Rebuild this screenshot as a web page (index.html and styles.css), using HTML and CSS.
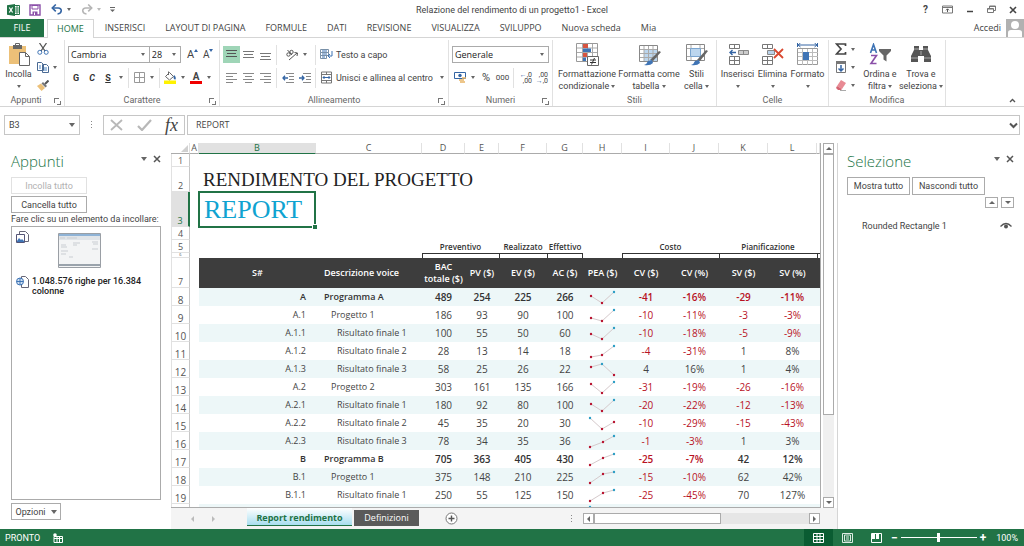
FILE: index.html
```html
<!DOCTYPE html>
<html lang="it">
<head>
<meta charset="utf-8">
<title>Relazione del rendimento di un progetto1 - Excel</title>
<link rel="stylesheet" href="styles.css">
</head>
<body>
<header class="titlebar">
  <div class="quick">
    <svg class="app-logo" width="13" height="12" viewBox="0 0 13 12"><path d="M7 1.500h5.500v9H7z" fill="#fff" stroke="#217346"/><path d="M8 4h4M8 6h4M8 8h4M10 2v8" stroke="#217346" stroke-width=".8"/><path d="M0 1.200 8 0v12L0 10.800z" fill="#217346"/><path d="m2.300 3.500 3.300 5M5.600 3.500l-3.300 5" stroke="#fff" stroke-width="1.300"/></svg>
    <button class="ib" aria-label="Salva"><svg width="12" height="12" viewBox="0 0 12 12"><path d="M1 1h10v10H1z" fill="#fff" stroke="#8a4fa8" stroke-width="1.400"/><path d="M3 1.500h6V5H3z" fill="#fff" stroke="#8a4fa8"/><path d="M3.500 7.500h5V11h-5z" fill="#8a4fa8"/><path d="M5 8.500h1V11H5z" fill="#fff"/></svg></button>
    <button class="ib undo" aria-label="Annulla"><svg width="12" height="11" viewBox="0 0 12 11"><path d="M1.500 4h5.700c4.200 0 4.200 5.500-.7 6" fill="none" stroke="#3465a4" stroke-width="1.600"/><path d="M4.800.5 1.300 4l3.500 3.400" fill="none" stroke="#3465a4" stroke-width="1.600"/></svg><i class="caret"></i></button>
    <button class="ib redo" aria-label="Ripristina"><svg width="12" height="11" viewBox="0 0 12 11"><path d="M10.500 4H4.800C.6 4 .6 9.500 5.500 10" fill="none" stroke="#b5b5b5" stroke-width="1.600"/><path d="m7.200.5 3.500 3.500-3.500 3.400" fill="none" stroke="#b5b5b5" stroke-width="1.600"/></svg><i class="caret pale"></i></button>
    <button class="ib" aria-label="Personalizza"><svg width="5" height="6" viewBox="0 0 5 6"><path d="M0 .5h5" stroke="#666"/><path d="M0 2.500h5L2.500 5z" fill="#666"/></svg></button>
  </div>
  <h1 class="doc-title">Relazione del rendimento di un progetto1 - Excel</h1>
  <div class="window-buttons">
    <button class="ib help" aria-label="Guida">?</button>
    <button class="ib" aria-label="Opzioni barra multifunzione"><svg width="11" height="9" viewBox="0 0 11 9"><path d="M.5 1h10v7H.500zM.5 2.500h10" fill="none" stroke="#777"/><path d="M5.500 7V4M4 5.300l1.500-1.500L7 5.300" fill="none" stroke="#555"/></svg></button>
    <button class="ib" aria-label="Riduci a icona"><svg width="8" height="8" viewBox="0 0 8 8"><path d="M1 5.500h6" stroke="#444" stroke-width="1.500"/></svg></button>
    <button class="ib" aria-label="Ripristina giù"><svg width="9" height="9" viewBox="0 0 9 9"><path d="M.5 3.500h6v4h-6zM.5 4h6M2.500 3V1h6v4.500H7M2.500 1.500h6" fill="none" stroke="#777"/></svg></button>
    <button class="ib" aria-label="Chiudi"><svg width="8" height="8" viewBox="0 0 8 8"><path d="m1 1 6 6M7 1 1 7" stroke="#444" stroke-width="1.600"/></svg></button>
  </div>
</header>

<nav class="tabs">
  <button class="tab file">FILE</button>
  <button class="tab active">HOME</button>
  <button class="tab">INSERISCI</button>
  <button class="tab">LAYOUT DI PAGINA</button>
  <button class="tab">FORMULE</button>
  <button class="tab">DATI</button>
  <button class="tab">REVISIONE</button>
  <button class="tab">VISUALIZZA</button>
  <button class="tab">SVILUPPO</button>
  <button class="tab">Nuova scheda</button>
  <button class="tab">Mia</button>
  <button class="account">Accedi
    <svg width="18" height="18" viewBox="0 0 18 18"><path d="M0 0h18v18H0z" fill="#b1b1b1"/><circle cx="9" cy="6" r="4" fill="#fff"/><path d="M2 18v-4.500Q2 11 5 11h8q3 0 3 2.500V18z" fill="#fff"/></svg>
  </button>
</nav>

<section class="ribbon">
  <div class="group g-clipboard">
    <div class="body row-body">
      <button class="big paste"><svg width="22" height="23" viewBox="0 0 22 23"><path d="M1 3h17v18H1z" fill="#ecc078"/><path d="M5 2h9v4H5z" fill="#666"/><path d="M7.500.5h4V3h-4z" fill="none" stroke="#666"/><path d="M11.500 9.500h6l4 4v9h-10z" fill="#fff" stroke="#666"/><path d="M17.500 9.500v4h4" fill="none" stroke="#666"/></svg><span>Incolla</span><i class="caret"></i></button>
      <div class="stack">
        <button class="ib" aria-label="Taglia"><svg width="12" height="12" viewBox="0 0 12 12"><path d="m2.500 0 5.500 8M9.500 0 4 8" stroke="#555" stroke-width="1.300"/><circle cx="2.800" cy="9.300" r="2" fill="none" stroke="#3f74b5"/><circle cx="9.200" cy="9.300" r="2" fill="none" stroke="#3f74b5"/></svg></button>
        <button class="ib" aria-label="Copia"><svg width="12" height="11" viewBox="0 0 12 11"><path d="M.5.500h4l2 2v6h-6zM5.500 2.500h4l2 2v6h-6z" fill="#fff" stroke="#4a6a94"/><path d="M2 4h2M2 6h2M7 6h3M7 8h3" stroke="#4a84c4"/></svg><i class="caret"></i></button>
        <button class="ib" aria-label="Copia formato"><svg width="12" height="11" viewBox="0 0 12 11"><path d="m0 6 4-2.500L8 8l-3.500 3z" fill="#ecc078"/><path d="m4.500 3.500 4 4L10 6 6 2z" fill="#777"/><path d="m8 4 3.500-3.500" stroke="#555" stroke-width="2"/></svg></button>
      </div>
    </div>
    <div class="label">Appunti<i class="launcher"></i></div>
  </div>

  <div class="group g-font">
    <div class="body">
      <div class="row">
        <span class="combo font-name"><select aria-label="Tipo di carattere"><option>Cambria</option></select></span><span class="combo font-size"><select aria-label="Dimensione carattere"><option>28</option></select></span>
        <button class="ib grow" aria-label="Aumenta dimensione carattere">A<svg width="4" height="3" viewBox="0 0 4 3"><path d="m0 3 2-3 2 3z" fill="#3465a4"/></svg></button>
        <button class="ib shrink" aria-label="Riduci dimensione carattere">A<svg width="4" height="3" viewBox="0 0 4 3"><path d="m0 0 2 3 2-3z" fill="#3465a4"/></svg></button>
      </div>
      <div class="row">
        <button class="ib w16 bold">G</button><button class="ib w16 bold italic">C</button><button class="ib w16 bold underline">S</button><button class="ib w10" aria-label="Sottolineature"><i class="caret"></i></button>
        <i class="sep"></i>
        <button class="ib w16" aria-label="Bordi"><svg width="11" height="11" viewBox="0 0 11 11"><path d="M.5.500h10v10H.500zM5.500 1v9M1 5.500h9" fill="none" stroke="#999"/></svg></button><button class="ib w10" aria-label="Altri bordi"><i class="caret"></i></button>
        <i class="sep"></i>
        <button class="ib w16" aria-label="Colore riempimento"><svg width="13" height="13" viewBox="0 0 13 13"><path d="m5.500 1.500 4 4-4 3.500-4-3.500z" fill="#fff" stroke="#666"/><path d="M4.500 4V.5" stroke="#666"/><path d="M10 4q2.500 2 1.500 4.500Q9.500 9 9.500 6z" fill="#3465a4"/><path d="M0 9.500h12V13H0z" fill="#fff200"/></svg></button><button class="ib w10" aria-label="Altri riempimenti"><i class="caret"></i></button>
        <button class="ib font-color" aria-label="Colore carattere">A</button><button class="ib w10" aria-label="Altri colori"><i class="caret"></i></button>
      </div>
    </div>
    <div class="label">Carattere<i class="launcher"></i></div>
  </div>

  <div class="group g-align">
    <div class="body">
      <div class="row">
        <button class="ib w17 on" aria-label="Allinea in alto"><svg width="11" height="11" viewBox="0 0 11 11"><path d="M0 1.500h11M1 4.500h9M0 7.500h11" stroke="#555"/></svg></button><button class="ib w17" aria-label="Allinea al centro verticalmente"><svg width="11" height="11" viewBox="0 0 11 11"><path d="M0 2.500h11M1 5.500h9M0 8.500h11" stroke="#777"/></svg></button><button class="ib w17" aria-label="Allinea in basso"><svg width="11" height="11" viewBox="0 0 11 11"><path d="M0 4.500h11M1 7.500h9M0 10.500h11" stroke="#777"/></svg></button>
        <i class="sep"></i>
        <button class="ib w34" aria-label="Orientamento"><svg width="12" height="12" viewBox="0 0 12 12"><circle cx="2.500" cy="5.500" r="1.700" fill="none" stroke="#555"/><circle cx="5.500" cy="3" r="1.700" fill="none" stroke="#555"/><path d="m1.500 1 4.500 5M3 11l8-7M8.500 3.500 11.500 4 11 7" fill="none" stroke="#555"/></svg><i class="caret"></i></button>
        <i class="sep"></i>
        <button class="text-button"><svg width="13" height="13" viewBox="0 0 13 13"><path d="M.5 1.500h8v3h-8zM.5 4.500h8v3h-8zM.5 7.500h6v3h-6z" fill="#fff" stroke="#7890a8"/><path d="M2 3h5M2 6h5M2 9h3" stroke="#3f74b5"/><path d="M12 3v5H8m2-2L8 8l2 2" fill="none" stroke="#3f74b5"/></svg>Testo a capo</button>
      </div>
      <div class="row">
        <button class="ib w17" aria-label="Allinea a sinistra"><svg width="11" height="10" viewBox="0 0 11 10"><path d="M0 .5h11M0 3.500h7M0 6.500h11M0 9.500h7" stroke="#888"/></svg></button><button class="ib w17" aria-label="Centra"><svg width="11" height="10" viewBox="0 0 11 10"><path d="M0 .5h11M2 3.500h7M0 6.500h11M2 9.500h7" stroke="#888"/></svg></button><button class="ib w17" aria-label="Allinea a destra"><svg width="11" height="10" viewBox="0 0 11 10"><path d="M0 .5h11M4 3.500h7M0 6.500h11M4 9.500h7" stroke="#888"/></svg></button>
        <i class="sep"></i>
        <button class="ib w17" aria-label="Riduci rientro"><svg width="12" height="10" viewBox="0 0 12 10"><path d="M4 .5h8M7 3.500h5M7 6.500h5M4 9.500h8" stroke="#888"/><path d="M6 5H1m2-2.200L1 5l2 2.200" fill="none" stroke="#3465a4" stroke-width="1.300"/></svg></button><button class="ib w17" aria-label="Aumenta rientro"><svg width="12" height="10" viewBox="0 0 12 10"><path d="M4 .5h8M7 3.500h5M7 6.500h5M4 9.500h8" stroke="#888"/><path d="M0 5h5M3 2.800 5 5 3 7.200" fill="none" stroke="#3465a4" stroke-width="1.300"/></svg></button>
        <i class="sep"></i>
        <button class="text-button"><svg width="13" height="13" viewBox="0 0 13 13"><path d="M1.500 1h10v11h-10zM1.500 3.500h10M1.500 9.500h10M6.500 1v2.500M6.500 9.500V12" fill="none" stroke="#777"/><path d="M3 6.500h7M4.500 5 3 6.500 4.500 8M8.500 5 10 6.500 8.500 8" fill="none" stroke="#3465a4"/></svg>Unisci e allinea al centro<i class="caret far"></i></button>
      </div>
    </div>
    <div class="label">Allineamento<i class="launcher"></i></div>
  </div>

  <div class="group g-number">
    <div class="body">
      <div class="row"><span class="combo number-format"><select aria-label="Formato numero"><option>Generale</option></select></span></div>
      <div class="row">
        <button class="ib w16" aria-label="Formato contabilità"><svg width="13" height="13" viewBox="0 0 13 13"><path d="M.5 1.500h11v6H.500z" fill="#fff" stroke="#3465a4"/><circle cx="6" cy="4.500" r="1.700" fill="#3465a4"/><path d="M5 9h5M6 11h5M8 7h4" stroke="#e8b464" stroke-width="1.500"/></svg></button><button class="ib w10" aria-label="Altri formati contabilità"><i class="caret"></i></button>
        <button class="ib w16 percent">%</button><button class="ib w17 thousands">000</button>
        <i class="sep"></i>
        <button class="ib w16 decimals" aria-label="Aumenta decimali"><span><b>←</b>,0</span><span>,00</span></button>
        <button class="ib w16 decimals" aria-label="Diminuisci decimali"><span>,00</span><span><b>→</b>,0</span></button>
      </div>
    </div>
    <div class="label">Numeri<i class="launcher"></i></div>
  </div>

  <div class="group g-styles">
    <div class="body row-body">
      <button class="big w62"><svg width="23" height="23" viewBox="0 0 23 23"><path d="M.5.500h21v18H.500z" fill="#fff" stroke="#999"/><path d="M1 5h20M1 9.500h20M1 14h20M6.500 1v17M11.500 1v17M16.500 1v17" stroke="#aaa"/><path d="M7 1h5v4H7z" fill="#d65440"/><path d="M7 5.500h8V9H7z" fill="#3f74b5"/><path d="M7 10h4v4H7z" fill="#d65440"/><path d="M7 14.500h3V18H7z" fill="#3f74b5"/><path d="M11.500 13.500h11v9h-11z" fill="#fff" stroke="#666"/><path d="M14 17h6M14 19.500h6M18.500 15l-3 6.500" stroke="#333"/></svg><span>Formattazione</span><span>condizionale <i class="caret"></i></span></button>
      <button class="big w62"><svg width="23" height="23" viewBox="0 0 23 23"><path d="M1.500 2.500h18v16h-18z" fill="#fff" stroke="#888"/><path d="M6 7h13v11H6z" fill="#bcd6ee"/><path d="M2 6.500h17M2 10.500h17M2 14.500h17M6 3v15M10.500 3v15M15 3v15" stroke="#aaa"/><path d="m12 17 9-9 2 1-8 9z" fill="#666"/><path d="M6 22q3-1 4-4l4-1 1 3q-3 3-9 2z" fill="#3f74b5"/></svg><span>Formatta come</span><span>tabella <i class="caret"></i></span></button>
      <button class="big w32"><svg width="23" height="23" viewBox="0 0 23 23"><path d="M1.500 1.500h18v16h-18z" fill="#fff" stroke="#888"/><path d="M2 5.500h17M2 13.500h17M6 2v15M15 2v15" stroke="#aaa"/><path d="M5.500 5.500h10v8h-10z" fill="#bcd6ee" stroke="#7ba5cf"/><path d="m12 17 9-10 2 1-8 10z" fill="#666"/><path d="M6 22q3-1 4-4l4-1 1 3q-3 3-9 2z" fill="#3f74b5"/></svg><span>Stili</span><span>cella <i class="caret"></i></span></button>
    </div>
    <div class="label">Stili</div>
  </div>

  <div class="group g-cells">
    <div class="body row-body">
      <button class="big"><svg width="22" height="23" viewBox="0 0 22 23"><path d="M2.500 1.500h10v4h-10zM7.500 1.500v4M2.500 13.500h10v8h-10zM7.500 13.500v8M2.500 17.500h10" fill="#fff" stroke="#777"/><path d="M11.500 7.500h10v4h-10zM16.500 7.500v4" fill="#ccc" stroke="#888"/><path d="M9 9.500H3M5.500 7 3 9.500 5.500 12" fill="none" stroke="#3465a4" stroke-width="1.400"/></svg><span>Inserisci</span><i class="caret"></i></button>
      <button class="big"><svg width="22" height="23" viewBox="0 0 22 23"><path d="M.5 1.500h10v4H.500zM5.500 1.500v4M.5 13.500h10v8H.500zM5.500 13.500v8M.5 17.500h10" fill="#fff" stroke="#777"/><path d="M5.500 7.500h7v4h-7z" fill="#b9d2ea" stroke="#888"/><path d="m12 6 9 9M21 6l-9 9" stroke="#d9482f" stroke-width="1.800"/></svg><span>Elimina</span><i class="caret"></i></button>
      <button class="big"><svg width="22" height="23" viewBox="0 0 22 23"><path d="M.5 5.500h20v16H.500z" fill="#fff" stroke="#999"/><path d="M1 9.500h20M1 13.500h20M1 17.500h20M5.500 6v16M10.500 6v16M15.500 6v16" stroke="#bbb"/><path d="M6 9h6v8H6z" fill="#3f74b5"/><path d="M1 2h19M3.500 0 1 2l2.500 2M17.500 0 20 2l-2.500 2M.5 0v4M20.500 0v4" fill="none" stroke="#3465a4"/></svg><span>Formato</span><i class="caret"></i></button>
    </div>
    <div class="label">Celle</div>
  </div>

  <div class="group g-edit">
    <div class="body row-body">
      <div class="stack">
        <button class="ib" aria-label="Somma automatica"><svg width="12" height="12" viewBox="0 0 12 12"><path d="M10.500 3V1H1.500l4.500 5-4.500 5h9V9" fill="none" stroke="#444" stroke-width="1.700"/></svg><i class="caret"></i></button>
        <button class="ib" aria-label="Riempimento"><svg width="12" height="12" viewBox="0 0 12 12"><path d="M1.500.500h9v11h-9z" fill="#fff" stroke="#777"/><path d="M1 0h10v3H1z" fill="#777"/><path d="M6 4v6M3.500 7.500 6 10l2.500-2.500" fill="none" stroke="#3465a4" stroke-width="1.500"/></svg><i class="caret"></i></button>
        <button class="ib" aria-label="Cancella"><svg width="12" height="12" viewBox="0 0 12 12"><path d="m6 1 5 3-4 6-5-3z" fill="#e88a94"/><path d="m2 7 5 3-1 1H3L1 9z" fill="#d56472"/><path d="M5 11.500h6" stroke="#aaa"/></svg><i class="caret"></i></button>
      </div>
      <button class="big w42"><svg width="22" height="23" viewBox="0 0 22 23"><path d="M1.500 10 4.500 1.500 7.500 10M2.500 7h4" fill="none" stroke="#3f74b5" stroke-width="1.600"/><path d="M2 12.500h5.500L2 20.500h5.500" fill="none" stroke="#8a4fa8" stroke-width="1.600"/><path d="M10 6h12v2l-4.500 4.500v6l-3-2v-4L10 8z" fill="#666"/></svg><span>Ordina e</span><span>filtra <i class="caret"></i></span></button>
      <button class="big w42"><svg width="22" height="23" viewBox="0 0 22 23"><path d="M4 3h5v4h4V3h5v4l3 6v6h-7v-6H8v6H1v-6l3-6z" fill="#555"/><path d="M1 15h7M14 15h7M4 6h5M13 6h5M11 8v4" stroke="#aaa"/></svg><span>Trova e</span><span>seleziona <i class="caret"></i></span></button>
    </div>
    <div class="label">Modifica</div>
  </div>
  <button class="ib collapse" aria-label="Comprimi barra multifunzione"><svg width="7" height="5" viewBox="0 0 7 5"><path d="m1 4 2.500-2.500L6 4" fill="none" stroke="#555" stroke-width="1.400"/></svg></button>
</section>

<section class="formula-bar">
  <div class="name-box"><input aria-label="Casella nome" value="B3"><i class="caret big-caret"></i></div>
  <i class="dots"></i>
  <div class="fx">
    <button class="ib" aria-label="Annulla modifica"><svg width="13" height="12" viewBox="0 0 13 12"><path d="m1 1 11 10M12 1 1 11" stroke="#b8b8b8" stroke-width="1.800"/></svg></button>
    <button class="ib" aria-label="Invio"><svg width="15" height="12" viewBox="0 0 15 12"><path d="m1 7 4 4 9-10" fill="none" stroke="#b8b8b8" stroke-width="2.200"/></svg></button>
    <button class="ib fx-label">fx</button>
  </div>
  <div class="formula"><input aria-label="Barra della formula" value="REPORT"><svg width="9" height="7" viewBox="0 0 9 7"><path d="m1 1.500 3.500 3.500L8 1.500" fill="none" stroke="#555" stroke-width="2"/></svg></div>
</section>

<main class="workspace">
  <aside class="pane clipboard-pane">
    <div class="pane-head"><h2>Appunti</h2><i class="caret big-caret"></i><button class="ib" aria-label="Chiudi Appunti"><svg width="8" height="8" viewBox="0 0 8 8"><path d="m1 1 6 6M7 1 1 7" stroke="#555" stroke-width="1.500"/></svg></button></div>
    <button class="btn wide" disabled>Incolla tutto</button>
    <button class="btn wide">Cancella tutto</button>
    <p class="hint">Fare clic su un elemento da incollare:</p>
    <ul class="clips">
      <li><svg width="13" height="13" viewBox="0 0 13 13"><path d="M3.500.500h6l3 3v7h-9z" fill="#fff" stroke="#667"/><path d="M.5 3.500h8v8h-8z" fill="#fff" stroke="#557"/><path d="m1 10 2-3 2 2 1-1 2 2v1H1z" fill="#3f74b5"/></svg>
        <svg class="thumb" width="43" height="35" viewBox="0 0 43 35"><path d="M.5.500h42v34H.500z" fill="#f3f4f5" stroke="#9a9fa5"/><path d="M1 1h41v2H1z" fill="#8fb3d6"/><path d="M1 3h41v4H1z" fill="#e0e4e8"/><path d="M2 5h5M9 5h10M3 12h5M3 14h6M15 10h7M15 12h4M3 18h7M3 21h5M11 24h4M34 9h6M35 11h5M34 16h6" stroke="#c9cdd2"/><path d="M1 32h41" stroke="#9aa3ac" stroke-width="2"/></svg></li>
      <li><svg width="13" height="12" viewBox="0 0 13 12"><path d="M5.500.500h4l3 3v8h-7z" fill="#fff" stroke="#667"/><circle cx="4" cy="5.500" r="3.500" fill="#cfe0f2" stroke="#3f74b5"/><path d="M.5 5.500h7M4 2v7" stroke="#3f74b5"/></svg><span>1.048.576 righe per 16.384 colonne</span></li>
    </ul>
    <button class="btn options">Opzioni <i class="caret big-caret"></i></button>
  </aside>

  <section class="workbook">
    <div class="viewport">
      <div class="sheet">
        <table>
          <colgroup><col class="c-h"><col class="c-a"><col class="c-b"><col class="c-c"><col class="c-d"><col class="c-e"><col class="c-f"><col class="c-g"><col class="c-hh"><col class="c-i"><col class="c-j"><col class="c-j"><col class="c-j"><col class="c-m"></colgroup>
          <thead><tr><th><svg width="7" height="7" viewBox="0 0 7 7"><path class="corner" d="M7 0v7H0z"/></svg></th><th>A</th><th class="sel">B</th><th>C</th><th>D</th><th>E</th><th>F</th><th>G</th><th>H</th><th>I</th><th>J</th><th>K</th><th>L</th><th></th></tr></thead>
          <tbody>
            <tr class="r13"><th>1</th><td colspan="13"></td></tr>
            <tr class="r25"><th>2</th><td></td><td colspan="12" class="title">RENDIMENTO DEL PROGETTO</td></tr>
            <tr class="r35"><th class="sel">3</th><td></td><td class="report">REPORT<i class="handle"></i></td><td colspan="11"></td></tr>
            <tr class="r13"><th>4</th><td colspan="13"></td></tr>
            <tr class="r13 caps"><th>5</th><td colspan="3"></td><td colspan="2">Preventivo</td><td>Realizzato</td><td>Effettivo</td><td></td><td colspan="2">Costo</td><td colspan="2">Pianificazione</td><td></td></tr>
            <tr class="r5"><th>6</th><td colspan="3"></td><td colspan="2" class="br"></td><td class="br"></td><td class="br end"></td><td></td><td colspan="2" class="br"></td><td colspan="2" class="br"></td><td class="br"></td></tr>
            <tr class="heads"><th>7</th><td></td><td>S#</td><td class="l">Descrizione voice</td><td>BAC totale ($)</td><td>PV ($)</td><td>EV ($)</td><td>AC ($)</td><td>PEA ($)</td><td>CV ($)</td><td>CV (%)</td><td>SV ($)</td><td>SV (%)</td><td></td></tr>
            <tr class="d band b"><th>8</th><td></td><td>A</td><td>Programma A</td><td>489</td><td>254</td><td>225</td><td>266</td><td><svg width="39" height="18"><path d="m8 8 11 7 12-11"/><circle cx="8" cy="8" r="1.200"/><circle cx="19" cy="15" r="1.200"/><circle class="hi" cx="31" cy="4" r="1.200"/></svg></td><td class="n">-41</td><td class="n">-16%</td><td class="n">-29</td><td class="n">-11%</td><td></td></tr>
            <tr class="d p"><th>9</th><td></td><td>A.1</td><td>Progetto 1</td><td>186</td><td>93</td><td>90</td><td>100</td><td><svg width="39" height="18"><path d="m8 12 11 3 12-11"/><circle cx="8" cy="12" r="1.200"/><circle cx="19" cy="15" r="1.200"/><circle class="hi" cx="31" cy="4" r="1.200"/></svg></td><td class="n">-10</td><td class="n">-11%</td><td class="n">-3</td><td class="n">-3%</td><td></td></tr>
            <tr class="d band s"><th>10</th><td></td><td>A.1.1</td><td>Risultato finale 1</td><td>100</td><td>55</td><td>50</td><td>60</td><td><svg width="39" height="18"><path d="m8 10 11 5 12-11"/><circle cx="8" cy="10" r="1.200"/><circle cx="19" cy="15" r="1.200"/><circle class="hi" cx="31" cy="4" r="1.200"/></svg></td><td class="n">-10</td><td class="n">-18%</td><td class="n">-5</td><td class="n">-9%</td><td></td></tr>
            <tr class="d s"><th>11</th><td></td><td>A.1.2</td><td>Risultato finale 2</td><td>28</td><td>13</td><td>14</td><td>18</td><td><svg width="39" height="18"><path d="m8 15 11-2 12-9"/><circle cx="8" cy="15" r="1.200"/><circle cx="19" cy="13" r="1.200"/><circle class="hi" cx="31" cy="4" r="1.200"/></svg></td><td class="n">-4</td><td class="n">-31%</td><td>1</td><td>8%</td><td></td></tr>
            <tr class="d band s"><th>12</th><td></td><td>A.1.3</td><td>Risultato finale 3</td><td>58</td><td>25</td><td>26</td><td>22</td><td><svg width="39" height="18"><path d="m8 7 11-3 12 11"/><circle cx="8" cy="7" r="1.200"/><circle class="hi" cx="19" cy="4" r="1.200"/><circle cx="31" cy="15" r="1.200"/></svg></td><td>4</td><td>16%</td><td>1</td><td>4%</td><td></td></tr>
            <tr class="d p"><th>13</th><td></td><td>A.2</td><td>Progetto 2</td><td>303</td><td>161</td><td>135</td><td>166</td><td><svg width="39" height="18"><path d="m8 6 11 9 12-11"/><circle cx="8" cy="6" r="1.200"/><circle cx="19" cy="15" r="1.200"/><circle class="hi" cx="31" cy="4" r="1.200"/></svg></td><td class="n">-31</td><td class="n">-19%</td><td class="n">-26</td><td class="n">-16%</td><td></td></tr>
            <tr class="d band s"><th>14</th><td></td><td>A.2.1</td><td>Risultato finale 1</td><td>180</td><td>92</td><td>80</td><td>100</td><td><svg width="39" height="18"><path d="m8 8 11 7 12-11"/><circle cx="8" cy="8" r="1.200"/><circle cx="19" cy="15" r="1.200"/><circle class="hi" cx="31" cy="4" r="1.200"/></svg></td><td class="n">-20</td><td class="n">-22%</td><td class="n">-12</td><td class="n">-13%</td><td></td></tr>
            <tr class="d s"><th>15</th><td></td><td>A.2.2</td><td>Risultato finale 2</td><td>45</td><td>35</td><td>20</td><td>30</td><td><svg width="39" height="18"><path d="m7 4 12 11 12-7"/><circle class="hi" cx="7" cy="4" r="1.200"/><circle cx="19" cy="15" r="1.200"/><circle cx="31" cy="8" r="1.200"/></svg></td><td class="n">-10</td><td class="n">-29%</td><td class="n">-15</td><td class="n">-43%</td><td></td></tr>
            <tr class="d band s"><th>16</th><td></td><td>A.2.3</td><td>Risultato finale 3</td><td>78</td><td>34</td><td>35</td><td>36</td><td><svg width="39" height="18"><path d="m7 15 13-5 11-6"/><circle cx="7" cy="15" r="1.200"/><circle cx="20" cy="10" r="1.200"/><circle class="hi" cx="31" cy="4" r="1.200"/></svg></td><td class="n">-1</td><td class="n">-3%</td><td>1</td><td>3%</td><td></td></tr>
            <tr class="d b"><th>17</th><td></td><td>B</td><td>Programma B</td><td>705</td><td>363</td><td>405</td><td>430</td><td><svg width="39" height="18"><path d="m7 15 13-7 11-4"/><circle cx="7" cy="15" r="1.200"/><circle cx="20" cy="8" r="1.200"/><circle class="hi" cx="31" cy="4" r="1.200"/></svg></td><td class="n">-25</td><td class="n">-7%</td><td>42</td><td>12%</td><td></td></tr>
            <tr class="d band p"><th>18</th><td></td><td>B.1</td><td>Progetto 1</td><td>375</td><td>148</td><td>210</td><td>225</td><td><svg width="39" height="18"><path d="m7 15 13-9 11-2"/><circle cx="7" cy="15" r="1.200"/><circle cx="20" cy="6" r="1.200"/><circle class="hi" cx="31" cy="4" r="1.200"/></svg></td><td class="n">-15</td><td class="n">-10%</td><td>62</td><td>42%</td><td></td></tr>
            <tr class="d s"><th>19</th><td></td><td>B.1.1</td><td>Risultato finale 1</td><td>250</td><td>55</td><td>125</td><td>150</td><td><svg width="39" height="18"><path d="m7 15 13-8 11-3"/><circle cx="7" cy="15" r="1.200"/><circle cx="20" cy="7" r="1.200"/><circle class="hi" cx="31" cy="4" r="1.200"/></svg></td><td class="n">-25</td><td class="n">-45%</td><td>70</td><td>127%</td><td></td></tr>
            <tr class="d band s"><th></th><td></td><td></td><td></td><td></td><td></td><td></td><td></td><td><svg width="39" height="18"><circle class="hi" cx="7" cy="3" r="1.200"/></svg></td><td></td><td></td><td></td><td></td><td></td></tr>
          </tbody>
        </table>
      </div>
      <div class="vscroll"><button class="sb" aria-label="Scorri su"><i class="arrow up"></i></button><i class="thumb-v"></i><i class="track"></i><button class="sb" aria-label="Scorri giù"><i class="arrow down"></i></button></div>
    </div>
    <div class="sheet-tabs">
      <div class="tab-nav"><i class="arrow left pale"></i><i class="arrow right pale"></i></div>
      <button class="sheet-tab current">Report rendimento</button>
      <button class="sheet-tab dark">Definizioni</button>
      <button class="ib add" aria-label="Nuovo foglio"><svg width="13" height="13" viewBox="0 0 13 13"><circle cx="6.500" cy="6.500" r="5.500" fill="#fff" stroke="#777"/><path d="M3.500 6.500h6M6.500 3.500v6" stroke="#555" stroke-width="1.400"/></svg></button>
      <i class="dots"></i>
      <div class="hscroll"><button class="sb" aria-label="Scorri a sinistra"><i class="arrow left"></i></button><i class="thumb-h"></i><i class="track"></i><button class="sb" aria-label="Scorri a destra"><i class="arrow right"></i></button></div>
    </div>
  </section>

  <aside class="pane selection-pane">
    <div class="pane-head"><h2>Selezione</h2><i class="caret big-caret"></i><button class="ib" aria-label="Chiudi Selezione"><svg width="8" height="8" viewBox="0 0 8 8"><path d="m1 1 6 6M7 1 1 7" stroke="#555" stroke-width="1.500"/></svg></button></div>
    <div class="pair"><button class="btn">Mostra tutto</button><button class="btn">Nascondi tutto</button></div>
    <div class="order"><button class="sb" aria-label="Porta avanti"><i class="arrow up"></i></button><button class="sb" aria-label="Porta indietro"><i class="arrow down"></i></button></div>
    <div class="object"><span>Rounded Rectangle 1</span><button class="ib" aria-label="Mostra o nascondi"><svg width="12" height="8" viewBox="0 0 12 8"><path d="M.5 4.500Q6-1.500 11.500 4.500" fill="none" stroke="#555" stroke-width="1.300"/><circle cx="6" cy="4.500" r="2" fill="#555"/></svg></button></div>
  </aside>
</main>

<footer class="status">
  <span>PRONTO</span>
  <svg class="macro" width="10" height="10" viewBox="0 0 10 10"><path d="M1 3.500h8.500v6H1zM1 5.500h8M4 3.500v6M6.500 3.500v6" fill="none" stroke="#fff"/><circle cx="2" cy="2" r="1.800" fill="#fff"/></svg>
  <div class="views">
    <button class="view on" aria-label="Normale"><svg width="11" height="10" viewBox="0 0 11 10"><path d="M.5.500h10v9H.500zM.5 3.500h10M.5 6.500h10M4 .5v9M7 .5v9" fill="none" stroke="#fff"/></svg></button>
    <button class="view" aria-label="Layout di pagina"><svg width="11" height="10" viewBox="0 0 11 10"><path d="M.5.500h10v9H.500zM2.500 2h6v6h-6zM4 4h3M4 6h3" fill="none" stroke="#dcebe2"/></svg></button>
    <button class="view" aria-label="Anteprima interruzioni di pagina"><svg width="11" height="10" viewBox="0 0 11 10"><path d="M.5.500h10v9H.500z" fill="none" stroke="#fff"/><path d="M1 1h3v5H1zM5 1h3v5H5z" fill="#fff"/></svg></button>
  </div>
  <label class="zoom"><span>−</span><input type="range" min="0" max="200" value="100" aria-label="Zoom"><span>+</span></label>
  <span class="percent-zoom">100%</span>
</footer>
</body>
</html>
```

FILE: styles.css
```css
* { box-sizing: border-box; }
body {
  margin: 0;
  height: 100vh;
  display: flex;
  flex-direction: column;
  overflow: hidden;
  background: #fff;
  color: #444;
  font: 9px/12px Roboto, "Noto Sans", sans-serif;
}
button, input, select { font: inherit; color: inherit; }
button { border: 0; padding: 0; background: none; white-space: nowrap; }
h1, h2, p, ul { margin: 0; padding: 0; font-weight: 400; }
svg { display: block; flex: none; }
i { display: block; font-style: normal; flex: none; }

.ib { display: flex; align-items: center; justify-content: center; gap: 4px; }
.caret { border: 2px solid transparent; border-top: 3px solid #666; border-bottom: 0; width: 4px; }
.caret.pale { border-top-color: #bbb; }
.caret.big-caret { border-width: 4px 3px 0; width: 6px; }

/* Title bar */
.titlebar { display: grid; grid-template-columns: 1fr auto 1fr; align-items: center; height: 19px; flex: none; }
.quick { display: flex; align-items: center; gap: 9px; padding-left: 7px; height: 16px; }
.quick .undo, .quick .redo { margin-left: 1px; }
.doc-title { font-size: 9px; line-height: 12px; }
.window-buttons { display: flex; justify-content: flex-end; gap: 13px; padding-right: 7px; height: 16px; }
.help { font-weight: 700; font-size: 10px; margin-right: 1px; }

/* Ribbon tabs */
.tabs { display: flex; height: 19px; flex: none; border-bottom: 1px solid #d5d5d5; font-family: "Open Sans", "Noto Sans", sans-serif; }
.tab { padding: 0 10px; height: 18px; }
.tab.file { background: #217346; color: #fff; width: 44px; margin-right: 3px; }
.tab.active { height: 19px; border: 1px solid #d5d5d5; border-bottom: 0; background: #fff; color: #217346; padding: 0 9px; margin-right: 1px; }
.account { margin-left: auto; display: flex; align-items: center; gap: 5px; }

/* Ribbon */
.ribbon { display: flex; flex: none; height: 69px; border-bottom: 1px solid #d5d5d5; }
.group { display: flex; flex-direction: column; justify-content: space-between; margin-top: 2px; border-right: 1px solid #e1e1e1; }
.g-clipboard { width: 65px; }
.g-font { width: 155px; }
.g-align { width: 229px; }
.g-number { width: 104px; }
.g-styles { width: 164px; }
.g-cells { width: 112px; }
.g-edit { width: 117px; }
.body { display: flex; flex-direction: column; gap: 6px; padding: 6px 3px 0; }
.body.row-body { flex-direction: row; gap: 0; padding: 3px 3px 0; }
.label { position: relative; text-align: center; color: #666; }
.g-clipboard .label { padding-right: 12px; }
.launcher { position: absolute; right: 5px; bottom: 3px; width: 5px; height: 5px; border: 1px solid #777; border-right: 0; border-bottom: 0; }
.launcher::after { content: ""; position: absolute; left: 2px; top: 2px; width: 3px; height: 3px; border: 1px solid #777; border-left: 0; border-top: 0; }
.row { display: flex; align-items: center; height: 17px; }
.sep { width: 1px; height: 20px; margin: 0 2px; background: #e1e1e1; }
.w10 { width: 10px; }
.w16 { width: 16px; }
.w17 { width: 17px; height: 17px; }
.w34 { width: 34px; }
.ib.w34 { gap: 5px; }
.on { background: #9fd5b7; }
.big { display: flex; flex-direction: column; align-items: center; text-align: center; }
.big svg { margin-bottom: 2px; }
.big > .caret { margin-top: 5px; }
.big span .caret { display: inline-block; vertical-align: middle; }
.big.paste { width: 31px; }
.big.w62 { width: 62px; }
.big.w32 { width: 33px; }
.big.w42 { width: 42px; }
.stack { display: flex; flex-direction: column; gap: 6px; align-items: flex-start; }
.g-clipboard .stack { padding-left: 3px; }
.g-edit .stack { padding: 0 5px 0 3px; }
.g-cells .big { width: 35px; }
.stack .ib { height: 12px; }

.combo { position: relative; height: 17px; border: 1px solid #ababab; }
.combo select { appearance: none; border: 0; width: 100%; height: 15px; padding: 0 0 0 2px; background: #fff; color: #222; font: 9px/14px "Open Sans", "Noto Sans", sans-serif; }
.combo::after { content: ""; position: absolute; right: 4px; top: 6px; border: 2px solid transparent; border-top: 3px solid #666; border-bottom: 0; }
.font-name { width: 84px; }
.font-size { width: 33px; margin-left: -1px; margin-right: 4px; }
.number-format { width: 98px; }
.grow, .shrink { width: 16px; gap: 0; align-items: flex-start; font-size: 11px; }
.shrink { font-size: 10px; }
.bold { font-weight: 700; color: #333; }
.italic { font-style: italic; }
.underline { text-decoration: underline; }
.font-color { font-weight: 700; font-size: 10px; line-height: 9px; border-bottom: 3px solid #f00000; width: 12px; margin: 0 2px; }
.text-button { display: flex; align-items: center; gap: 3px; padding-left: 2px; }
.text-button .far { margin-left: 4px; }
.percent { font-size: 11px; }
.thousands { font-size: 8px; }
.decimals { flex-direction: column; gap: 0; align-items: flex-end; font-size: 7px; line-height: 6px; }
.decimals b { color: #3465a4; }
.collapse { margin-left: auto; align-self: flex-end; padding: 3px 8px; }

/* Formula bar */
.formula-bar { display: flex; align-items: center; flex: none; height: 36px; padding: 0 4px; }
.name-box, .fx, .formula { display: flex; align-items: center; height: 20px; border: 1px solid #c6c6c6; }
.name-box { width: 76px; padding-right: 4px; }
.name-box input, .formula input { flex: 1; min-width: 0; border: 0; padding: 0 0 0 4px; background: none; outline: 0; }
.formula input { padding-left: 8px; font-family: "Open Sans", "Noto Sans", sans-serif; }
.dots { width: 1px; height: 8px; margin: 0 11px; background: repeating-linear-gradient(#888 0 1px, transparent 1px 3px); }
.fx { width: 82px; justify-content: space-between; padding: 0 6px; }
.fx-label { font: italic 400 18px/18px "Liberation Serif", serif; color: #444; }
.formula { flex: 1; margin-left: 2px; padding-right: 1px; }

/* Workspace */
.workspace { display: flex; flex: 1; min-height: 0; }
.pane { display: flex; flex-direction: column; align-items: flex-start; flex: none; padding: 7px 10px 9px 11px; }
.clipboard-pane { width: 171px; }
.selection-pane { width: 187px; border-left: 1px solid #d5d5d5; padding-left: 9px; }
.pane-head { display: flex; align-items: center; align-self: stretch; gap: 6px; height: 22px; margin-bottom: 5px; }
.pane-head h2 { flex: 1; color: #217346; font: 300 15px/22px "Open Sans", "Noto Sans", sans-serif; }
.pane-head .caret, .pane-head .ib { margin-bottom: 4px; }
.btn { border: 1px solid #ababab; height: 17px; background: #fff; display: flex; align-items: center; justify-content: center; }
.btn:disabled { color: #b1b1b1; border-color: #e1e1e1; }
.wide { width: 76px; margin-bottom: 2px; }
.wide + .wide { margin-bottom: 0; }
.hint { margin-bottom: 1px; white-space: nowrap; }
.clips { flex: 1; width: 150px; border: 1px solid #ababab; list-style: none; padding: 4px; margin-bottom: 3px; }
.clips li { display: flex; gap: 3px; color: #222; margin-bottom: 8px; line-height: 10px; font-weight: 500; }
.clips .thumb { margin: 2px 0 0 26px; }
.options { width: 50px; gap: 5px; }
.pair { display: flex; gap: 2px; }
.pair .btn { width: 63px; height: 18px; }
.pair .btn + .btn { width: 73px; }
.order { display: flex; gap: 3px; align-self: flex-end; margin-top: 2px; }
.order .sb { width: 13px; }
.object { display: flex; align-items: center; justify-content: space-between; align-self: stretch; margin-top: 12px; padding: 0 2px 0 15px; }

.workbook { display: flex; flex-direction: column; flex: 1; min-width: 0; }
.viewport { display: flex; flex: 1; min-height: 0; }
.sheet { flex: 1; min-width: 0; overflow: hidden; border-right: 1px solid #ababab; border-bottom: 1px solid #ababab; }
table { border-spacing: 0; table-layout: fixed; width: 649px; font: 10px/12px "Open Sans", "Noto Sans", sans-serif; }
th, td { padding: 0; text-align: center; }
th { font-size: 9px; font-weight: 400; color: #555; }
.c-h { width: 19px; } .c-a { width: 9px; } .c-b { width: 117px; } .c-c { width: 106px; }
.c-d { width: 43px; } .c-e { width: 34px; } .c-f { width: 48px; } .c-g { width: 36px; }
.c-hh { width: 39px; } .c-i { width: 48px; } .c-j { width: 49px; } .c-m { width: 3px; }
thead th { height: 11px; line-height: 10px; border-bottom: 1px solid #ababab; border-right: 1px solid #e1e1e1; }
thead th svg { margin-left: 10px; }
thead .corner { fill: #d0d0d0; }
th.sel { background: #e1e1e1; color: #217346; }
thead th.sel { border-bottom-color: #217346; }
tbody th { vertical-align: bottom; border-bottom: 1px solid #e1e1e1; border-right: 1px solid #c6c6c6; border-left: 1px solid #e1e1e1; line-height: 10px; }
tbody th.sel { border-right: 2px solid #217346; }
.r13 { height: 13px; }
.r25 { height: 25px; }
.r35 { height: 35px; }
.r5 { height: 5px; font-size: 4px; line-height: 4px; }
.r5 th { font-size: 4px; line-height: 4px; }
.title { text-align: left; padding-left: 4px; color: #222; font: 19px/24px "Liberation Serif", serif; vertical-align: bottom; }
.report { position: relative; text-align: left; padding-left: 5px; color: #0fa3d1; font: 26px/34px "Liberation Serif", serif; }
.report::after { content: ""; position: absolute; inset: -1px 0 -1px -1px; border: 2px solid #217346; }
.handle { position: absolute; z-index: 1; right: -1px; bottom: -2px; width: 5px; height: 5px; background: #217346; border: 1px solid #fff; border-right: 0; border-bottom: 0; }
.caps td { font-size: 8px; font-weight: 600; color: #333; line-height: 10px; white-space: nowrap; }
.br { border-top: 1px solid #333; border-left: 1px solid #333; }
.br.end { border-right: 1px solid #333; }
.heads { height: 30px; }
.heads td { font-size: 9px; font-weight: 600; color: #fff; background: #3d3d3d; }
.heads td:nth-child(2) { background: #fff; }
.heads .l { text-align: left; padding-left: 8px; }
.d { height: 18px; }
.d td { line-height: 18px; }
.d th { font-size: 10px; }
.d td:nth-child(3) { text-align: right; padding-right: 10px; font-size: 9px; }
.d td:nth-child(4) { text-align: left; padding-left: 8px; font-size: 9px; white-space: nowrap; }
.d.p td:nth-child(4) { padding-left: 15px; }
.d.s td:nth-child(4) { padding-left: 21px; }
.d.b td { font-weight: 600; color: #333; }
.band td:nth-child(n+3) { background: #edf7f8; }
.d td.n { color: #b8121f; }
td path { fill: none; stroke: #d5c9cb; }
td circle { fill: #b8122f; }
td .hi { fill: #2a9dc4; }

.vscroll { display: flex; flex-direction: column; flex: none; width: 16px; padding: 0 3px 0 2px; }
.sb { width: 11px; height: 11px; flex: none; border: 1px solid #ababab; background: #fff; display: flex; align-items: center; justify-content: center; }
.vscroll .thumb-v { flex: 262; border: 1px solid #ababab; background: #fff; width: 11px; }
.vscroll .track { flex: 83; background: #f0f0f0; }
.arrow { border: 3px solid transparent; width: 0; height: 0; }
.arrow.up { border-top: 0; border-bottom-color: #666; }
.arrow.down { border-bottom: 0; border-top-color: #666; }
.arrow.left { border-left: 0; border-right-color: #666; }
.arrow.right { border-right: 0; border-left-color: #666; }
.arrow.left.pale { border-right-color: #bbb; }
.arrow.right.pale { border-left-color: #bbb; }
.sheet-tabs { display: flex; flex: none; height: 21px; background: #f4f4f4; align-items: center; }
.tab-nav { display: flex; gap: 18px; width: 76px; padding-left: 20px; }
.sheet-tab { height: 18px; width: 105px; align-self: flex-start; font: 9px/16px "Open Sans", "Noto Sans", sans-serif; }
.sheet-tab.current { font-weight: 700; color: #217346; background: linear-gradient(#fff, #a9def0); border-bottom: 1px solid #217346; padding-top: 2px; }
.sheet-tab.dark { width: 65px; height: 16px; margin: 2px 0 0 2px; background: #5a5a5a; color: #fff; }
.add { margin-left: 26px; }
.sheet-tabs .dots { margin-left: auto; }
.hscroll { display: flex; width: 237px; margin-right: 17px; }
.hscroll .thumb-h { flex: 126; border: 1px solid #ababab; background: #fff; }
.hscroll .track { flex: 89; background: #e6e6e6; }

/* Status bar */
.status { display: flex; align-items: center; flex: none; height: 17px; padding: 0 6px 0 5px; background: #217346; color: #fff; }
.macro { margin-left: 13px; }
.views { display: flex; margin-left: auto; }
.view { width: 29px; height: 17px; display: flex; align-items: center; justify-content: center; }
.view.on { background: #0a5c32; }
.zoom { display: flex; align-items: center; gap: 3px; font-size: 12px; font-weight: 700; }
.zoom input { appearance: none; width: 76px; height: 9px; margin: 0; background: linear-gradient(#fff, #fff) center / 100% 1px no-repeat; }
.zoom input::-webkit-slider-thumb { appearance: none; width: 3px; height: 9px; background: #fff; }
.percent-zoom { margin-left: 10px; }
```
